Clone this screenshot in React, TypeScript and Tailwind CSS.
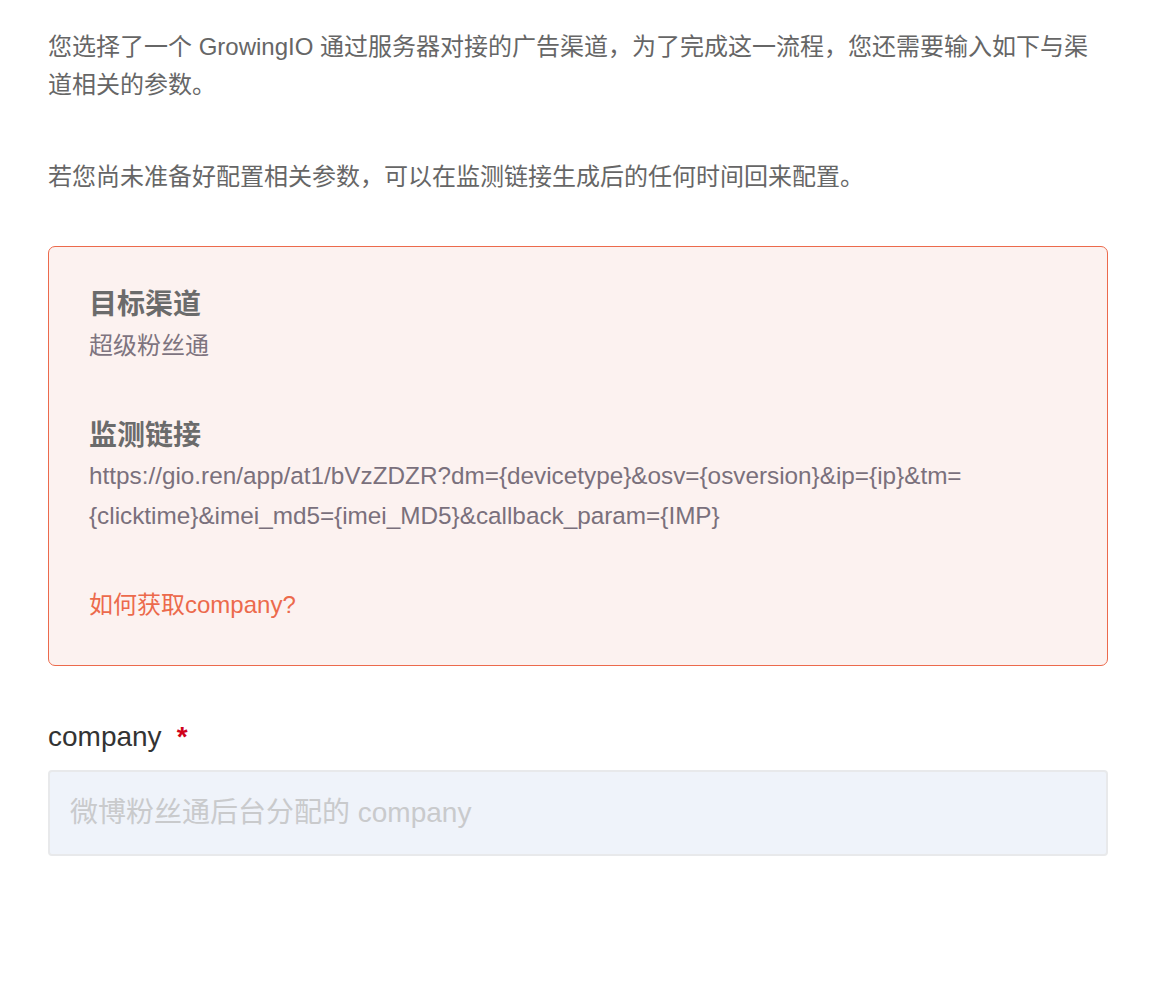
export default function App() {
  return (
    <div
      className="min-h-[1000px] bg-white px-[48px] pt-[28px] text-[24px] text-[#666666]"
      style={{ fontFamily: '"Liberation Sans", "Noto Sans CJK SC", sans-serif' }}
    >
      <div className="w-[1060px]">
        <p className="leading-[38px]">
          您选择了一个 GrowingIO 通过服务器对接的广告渠道，为了完成这一流程，您还需要输入如下与渠道相关的参数。
        </p>
        <p className="mt-[54px] leading-[38px]">
          若您尚未准备好配置相关参数，可以在监测链接生成后的任何时间回来配置。
        </p>

        <div className="mt-[50px] rounded-[7px] border border-[#ec6a4c] bg-[#fcf2f0] px-[40px] pt-[38px] pb-[40px]">
          <h3 className="text-[28px] font-bold leading-[40px] text-[#6b6b6b]">目标渠道</h3>
          <div className="mt-[1px] leading-[40px] text-[#7e747f]">超级粉丝通</div>

          <h3 className="mt-[50px] text-[28px] font-bold leading-[40px] text-[#6b6b6b]">监测链接</h3>
          <div className="text-[24.3px] leading-[40px] text-[#7a707c]">
            https://gio.ren/app/at1/bVzZDZR?dm={"{devicetype}"}&amp;osv={"{osversion}"}&amp;ip={"{ip}"}&amp;tm=
            <br />
            {"{clicktime}"}&amp;imei_md5={"{imei_MD5}"}&amp;callback_param={"{IMP}"}
          </div>

          <a className="mt-[49px] block leading-[40px] text-[#ec6a4c]" href="#">
            如何获取company?
          </a>
        </div>

        <div className="mt-[51px] flex items-center leading-[40px]">
          <span className="text-[28px] text-[#333333]">company</span>
          <span className="ml-[15px] text-[28px] font-bold text-[#d0021b]">*</span>
        </div>

        <input
          className="mt-[13px] block h-[86px] w-full rounded-[4px] border-2 border-[#e8e9eb] bg-[#eff3fa] px-[20px] text-[28px] text-[#333333] outline-none placeholder:text-[#c9cacc]"
          placeholder="微博粉丝通后台分配的 company"
        />
      </div>
    </div>
  );
}
